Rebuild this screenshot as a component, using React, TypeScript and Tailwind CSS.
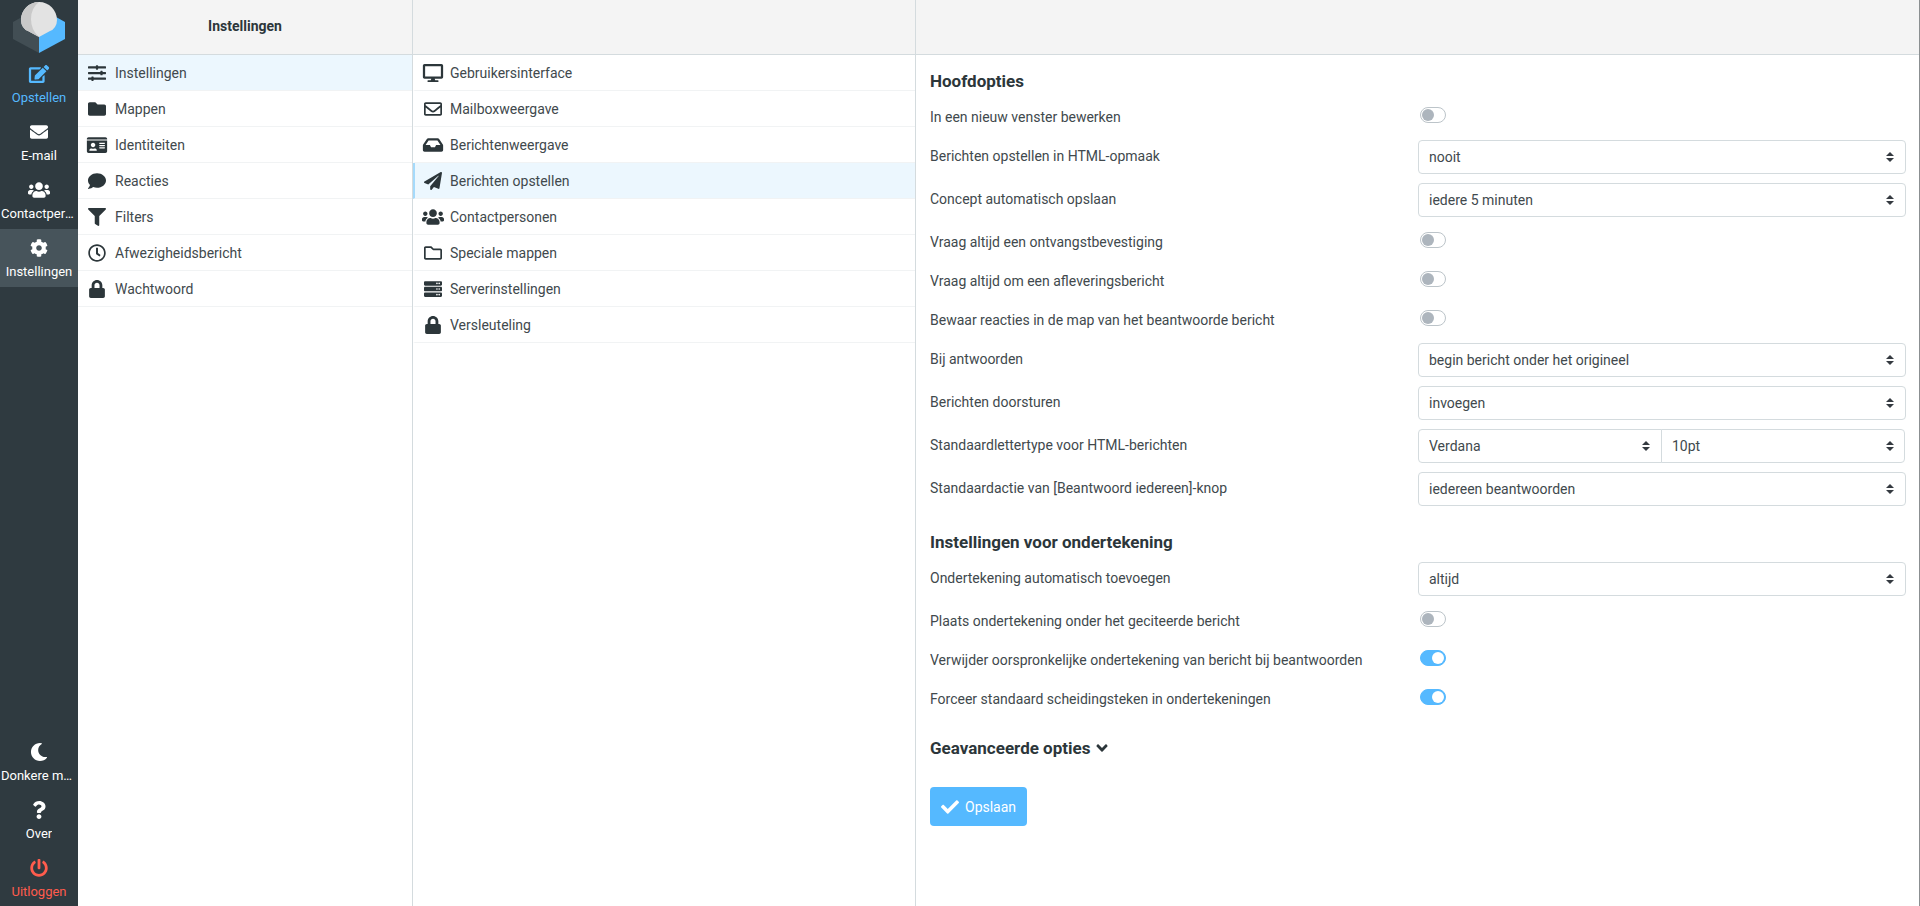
import { useState } from "react";
import type { IconType } from "react-icons";
import {
  FaAngleDown, FaCheck, FaCog, FaComment, FaDesktop, FaEdit, FaEnvelope, FaFilter, FaFolder,
  FaIdCard, FaInbox, FaLock, FaMoon, FaPaperPlane, FaPowerOff, FaQuestion, FaRegClock,
  FaRegEnvelope, FaRegFolder, FaServer, FaSlidersH, FaUsers,
} from "react-icons/fa";

interface Item {
  label: string;
  icon: IconType;
}

const TASKS: Item[] = [
  { label: "E-mail", icon: FaEnvelope },
  { label: "Contactpersonen", icon: FaUsers },
  { label: "Instellingen", icon: FaCog },
];

const SETTINGS: Item[] = [
  { label: "Instellingen", icon: FaSlidersH },
  { label: "Mappen", icon: FaFolder },
  { label: "Identiteiten", icon: FaIdCard },
  { label: "Reacties", icon: FaComment },
  { label: "Filters", icon: FaFilter },
  { label: "Afwezigheidsbericht", icon: FaRegClock },
  { label: "Wachtwoord", icon: FaLock },
];

const SECTIONS: Item[] = [
  { label: "Gebruikersinterface", icon: FaDesktop },
  { label: "Mailboxweergave", icon: FaRegEnvelope },
  { label: "Berichtenweergave", icon: FaInbox },
  { label: "Berichten opstellen", icon: FaPaperPlane },
  { label: "Contactpersonen", icon: FaUsers },
  { label: "Speciale mappen", icon: FaRegFolder },
  { label: "Serverinstellingen", icon: FaServer },
  { label: "Versleuteling", icon: FaLock },
];

export default function App() {
  const [section, setSection] = useState("Berichten opstellen");

  return (
    <div className="flex h-screen bg-white font-['Roboto',sans-serif] text-sm text-[#41494d]">
      <nav className="flex w-[78px] shrink-0 flex-col overflow-hidden bg-[#2f3a40]">
        <a href="#" aria-label="Start" className="flex h-[55px] shrink-0 justify-center pt-0.5">
          <Logo />
        </a>
        <Task label="Opstellen" icon={FaEdit} className="text-[#55b9ff]" />
        {TASKS.map((t) => (
          <Task key={t.label} {...t} className={t.label === "Instellingen" ? "bg-[#47545b] text-white" : "text-white"} />
        ))}
        <div className="mt-auto -mb-px">
          <Task label="Donkere modus" icon={FaMoon} className="text-white" />
          <Task label="Over" icon={FaQuestion} className="text-white" />
          <Task label="Uitloggen" icon={FaPowerOff} className="text-[#ff5c4d]" />
        </div>
      </nav>

      <aside className="flex w-[335px] shrink-0 flex-col border-r border-[#d4dbde]">
        <Header title="Instellingen" />
        <ul>
          {SETTINGS.map((s, i) => (
            <li key={s.label}>
              <button type="button" className={`flex h-9 w-full items-center gap-[7px] border-b border-[#f1f3f4] pl-2 text-left ${i === 0 ? "bg-[#ecf7fe]" : ""}`}>
                <RowIcon icon={s.icon} />
                {s.label}
              </button>
            </li>
          ))}
        </ul>
      </aside>

      <aside className="flex w-[503px] shrink-0 flex-col border-r border-[#d4dbde]">
        <Header />
        <ul>
          {SECTIONS.map((s) => (
            <li key={s.label}>
              <button
                type="button"
                onClick={() => setSection(s.label)}
                className={`flex h-9 w-full items-center gap-1.5 border-b border-l-2 border-b-[#f1f3f4] pl-[7px] text-left ${section === s.label ? "border-l-[#a5dafb] bg-[#ecf7fe]" : "border-l-transparent"}`}
              >
                <RowIcon icon={s.icon} />
                {s.label}
              </button>
            </li>
          ))}
        </ul>
      </aside>

      <main className="flex min-w-0 grow flex-col border-r border-[#8b8f91]">
        <Header />
        <form className="pt-3.5 pr-[13px] pl-3.5" onSubmit={(e) => e.preventDefault()}>
          <fieldset>
            <Legend>Hoofdopties</Legend>
            <Toggle id="newwin" label="In een nieuw venster bewerken" />
            <Select id="html" label="Berichten opstellen in HTML-opmaak" value="nooit" />
            <Select id="draft" label="Concept automatisch opslaan" value="iedere 5 minuten" />
            <Toggle id="mdn" label="Vraag altijd een ontvangstbevestiging" />
            <Toggle id="dsn" label="Vraag altijd om een afleveringsbericht" />
            <Toggle id="samefolder" label="Bewaar reacties in de map van het beantwoorde bericht" />
            <Select id="reply" label="Bij antwoorden" value="begin bericht onder het origineel" />
            <Select id="forward" label="Berichten doorsturen" value="invoegen" />
            <Select id="font" label="Standaardlettertype voor HTML-berichten" value="Verdana" second="10pt" />
            <Select id="replyall" label="Standaardactie van [Beantwoord iedereen]-knop" value="iedereen beantwoorden" />
          </fieldset>
          <fieldset className="mt-[15px]">
            <Legend>Instellingen voor ondertekening</Legend>
            <Select id="sig" label="Ondertekening automatisch toevoegen" value="altijd" />
            <Toggle id="sigbelow" label="Plaats ondertekening onder het geciteerde bericht" />
            <Toggle id="stripsig" label="Verwijder oorspronkelijke ondertekening van bericht bij beantwoorden" checked />
            <Toggle id="sigsep" label="Forceer standaard scheidingsteken in ondertekeningen" checked />
          </fieldset>
          <button type="button" className="mt-3 flex h-7 items-center gap-1.5 text-[17px] font-bold text-[#2c363a]">
            Geavanceerde opties
            <FaAngleDown className="h-[18px] w-3" />
          </button>
          <button type="submit" className="mt-[25px] flex h-[39px] items-center gap-1.5 rounded bg-[#55b9ff] px-[11px] text-white">
            <FaCheck className="size-[18px]" />
            Opslaan
          </button>
        </form>
      </main>
    </div>
  );
}

function Header({ title }: { title?: string }) {
  return (
    <header className="flex h-[55px] shrink-0 items-center justify-center border-b border-[#d4dbde] bg-[#f4f4f4] pb-0.5 font-bold text-[#2c363a]">
      {title}
    </header>
  );
}

function Task({ label, icon: Icon, className }: Item & { className: string }) {
  return (
    <a href="#" className={`flex h-[58px] shrink-0 flex-col items-center gap-[5px] px-px pt-2.5 text-[13px] leading-5 ${className}`}>
      <Icon className="h-[18px] w-[22px] shrink-0" />
      <span className="max-w-full truncate">{label}</span>
    </a>
  );
}

function RowIcon({ icon: Icon }: { icon: IconType }) {
  return <Icon className="h-[18px] w-[22px] shrink-0 text-[#2c363a]" />;
}

function Legend({ children }: { children: string }) {
  return <legend className="mb-2 text-[17px] leading-6 font-bold text-[#2c363a]">{children}</legend>;
}

function Toggle({ id, label, checked }: { id: string; label: string; checked?: boolean }) {
  return (
    <div className="grid h-[39px] grid-cols-2 items-start">
      <label htmlFor={id} className="pt-1.5 leading-5">{label}</label>
      <input
        id={id}
        type="checkbox"
        defaultChecked={checked}
        className="mt-1.5 ml-0.5 h-4 w-[26px] appearance-none rounded-full border border-[#bcc4c9] p-px before:block before:size-3 before:rounded-full before:bg-[#adb5bd] checked:border-[#55b9ff] checked:bg-[#55b9ff] checked:before:ml-auto checked:before:bg-white"
      />
    </div>
  );
}

function Select({ id, label, value, second }: { id: string; label: string; value: string; second?: string }) {
  return (
    <div className="grid h-[43px] grid-cols-2 items-start">
      <label htmlFor={id} className="pt-1.5 leading-5">{label}</label>
      {second ? (
        <div className="flex">
          <SelectBox id={id} value={value} className="rounded-l" />
          <SelectBox id={`${id}-size`} value={second} ariaLabel="Lettergrootte" className="-ml-px rounded-r" />
        </div>
      ) : (
        <SelectBox id={id} value={value} className="rounded" />
      )}
    </div>
  );
}

function SelectBox({ id, value, ariaLabel, className }: { id: string; value: string; ariaLabel?: string; className: string }) {
  return (
    <div className="grid flex-1 items-center">
      <select
        id={id}
        aria-label={ariaLabel}
        className={`col-start-1 row-start-1 h-[34px] w-full appearance-none border border-[#d4dbde] bg-white pr-6 pl-2.5 ${className}`}
      >
        <option>{value}</option>
      </select>
      <svg viewBox="0 0 4 5" className="pointer-events-none col-start-1 row-start-1 mr-3 h-2.5 w-2 justify-self-end" fill="#343a40" aria-hidden="true">
        <path d="M2 0L0 2h4zm0 5L0 3h4z" />
      </svg>
    </div>
  );
}

function Logo() {
  return (
    <svg viewBox="0 0 52 52" className="size-[52px]" aria-hidden="true">
      <path d="M0 20L9 15L26 20V51L0 37Z" fill="#424e54" />
      <path d="M52 20L43 15L26 20V51L52 37Z" fill="#55b9ff" />
      <path d="M26 0C36 0 44 8 44 18Q44 22 42 25Q40 28 37 29L26 35L15 29Q12 28 10 25Q8 22 8 18C8 8 16 0 26 0Z" fill="#e3e3e3" />
      <path d="M26 0Q18 6 18 17Q18 28 26 35L15 29Q12 28 10 25Q8 22 8 18C8 8 16 0 26 0Z" fill="#c9c9c9" />
    </svg>
  );
}
